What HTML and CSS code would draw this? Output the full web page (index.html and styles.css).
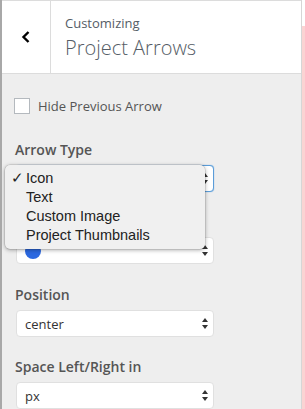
FILE: index.html
```html
<!DOCTYPE html>
<html>
<head>
<meta charset="utf-8">
<link rel="stylesheet" href="styles.css">
</head>
<body>
<div class="frame">
  <div class="panel">
    <div class="header">
      <div class="back">
        <svg width="10" height="12" viewBox="0 0 10 12"><path d="M7.5 1 L2.5 6 L7.5 11" fill="none" stroke="#000" stroke-width="2.4"/></svg>
      </div>
      <div class="titles">
        <div class="sub">Customizing</div>
        <div class="title">Project Arrows</div>
      </div>
    </div>
    <div class="body">
      <label class="check"><span class="box"></span>Hide Previous Arrow</label>

      <div class="field first">
        <div class="label">Arrow Type</div>
        <div class="select focus"><span></span><svg class="arr" width="6" height="11" viewBox="0 0 6 11"><path d="M3 0 L6 4 L0 4Z M3 11 L6 7 L0 7Z" fill="#333"/></svg></div>
        <div class="menu">
          <div class="item"><span class="tick">✓</span>Icon</div>
          <div class="item">Text</div>
          <div class="item">Custom Image</div>
          <div class="item">Project Thumbnails</div>
        </div>
      </div>

      <div class="field">
        <div class="label hidden">Icon Style</div>
        <div class="select"><span class="dot"></span><svg class="arr" width="6" height="11" viewBox="0 0 6 11"><path d="M3 0 L6 4 L0 4Z M3 11 L6 7 L0 7Z" fill="#333"/></svg></div>
      </div>

      <div class="field wide">
        <div class="label">Position</div>
        <div class="select"><span>center</span><svg class="arr" width="6" height="11" viewBox="0 0 6 11"><path d="M3 0 L6 4 L0 4Z M3 11 L6 7 L0 7Z" fill="#333"/></svg></div>
      </div>

      <div class="field">
        <div class="label">Space Left/Right in</div>
        <div class="select"><span>px</span><svg class="arr" width="6" height="11" viewBox="0 0 6 11"><path d="M3 0 L6 4 L0 4Z M3 11 L6 7 L0 7Z" fill="#333"/></svg></div>
      </div>
    </div>
  </div>
  <div class="edge"><div class="pink"></div></div>
</div>
</body>
</html>
```

FILE: styles.css
```css
html, body {
  margin: 0;
  padding: 0;
  width: 305px;
  height: 409px;
  overflow: hidden;
  background: #fff;
  font-family: "Open Sans", "Liberation Sans", sans-serif;
}
.frame {
  display: flex;
  height: 409px;
  overflow: hidden;
}
.panel {
  width: 299px;
  border-left: 2px solid #a8a8a8;
  border-right: 1px solid #d6d6d6;
  background: #eeeeee;
  display: flex;
  flex-direction: column;
  overflow: hidden;
}
.edge {
  width: 3px;
  display: flex;
  flex-direction: column;
  padding-top: 26px;
}
.pink {
  flex: 1;
  background: #fbd3d3;
}
.header {
  flex-shrink: 0;
  display: flex;
  height: 72px;
  background: #fff;
  border-top: 1px solid #dcdcdc;
  border-bottom: 1px solid #dcdcdc;
}
.back {
  width: 48px;
  border-right: 1px solid #dcdcdc;
  display: flex;
  align-items: center;
  justify-content: center;
}
.titles {
  padding-left: 14px;
  padding-top: 13px;
  color: #555d66;
}
.sub {
  font-size: 13px;
  line-height: 18px;
}
.title {
  font-size: 20px;
  font-weight: 300;
  line-height: 26px;
  margin-top: 3px;
}
.body {
  flex-shrink: 0;
  padding: 24px 0 0 12px;
  display: flex;
  flex-direction: column;
}
.check {
  display: flex;
  align-items: center;
  font-size: 13px;
  color: #555;
  height: 16px;
}
.box {
  width: 14px;
  height: 14px;
  border: 1px solid #b4b9be;
  background: #fff;
  margin-right: 8px;
}
.field {
  position: relative;
  margin-top: 20px;
  padding-left: 2px;
}
.field.first {
  margin-top: 26px;
}
.field.wide {
  margin-top: 21px;
}
.label {
  font-size: 14px;
  font-weight: 600;
  color: #555;
  line-height: 20px;
  margin-left: -1px;
}
.label.hidden {
  visibility: hidden;
}
.field .select {
  margin-top: 5px;
}
.select {
  height: 25px;
  border: 1px solid #e0e0e0;
  border-radius: 4px;
  background: #fff;
  display: flex;
  align-items: center;
  justify-content: space-between;
  padding: 0 5px 0 8px;
  width: 183px;
  font-size: 13px;
  color: #333;
}
.select.focus {
  border-color: #5b9dd9;
  box-shadow: 0 0 1px #5b9dd9;
}
.dot {
  width: 16px;
  height: 16px;
  border-radius: 50%;
  background: #2b68e0;
}
.menu {
  position: absolute;
  left: -9px;
  top: 25px;
  width: 200px;
  background: #f0f0f0;
  border-radius: 5px;
  box-shadow: 0 1px 4px rgba(0,0,0,0.35), 0 0 0 0.5px rgba(0,0,0,0.15);
  padding: 4px 0 4px;
  font-family: "Liberation Sans", Arial, sans-serif;
  font-size: 14.5px;
  color: #222;
  z-index: 2;
}
.item {
  position: relative;
  height: 19px;
  line-height: 19px;
  padding-left: 21px;
}
.tick {
  position: absolute;
  left: 6px;
  top: 0;
}
```
